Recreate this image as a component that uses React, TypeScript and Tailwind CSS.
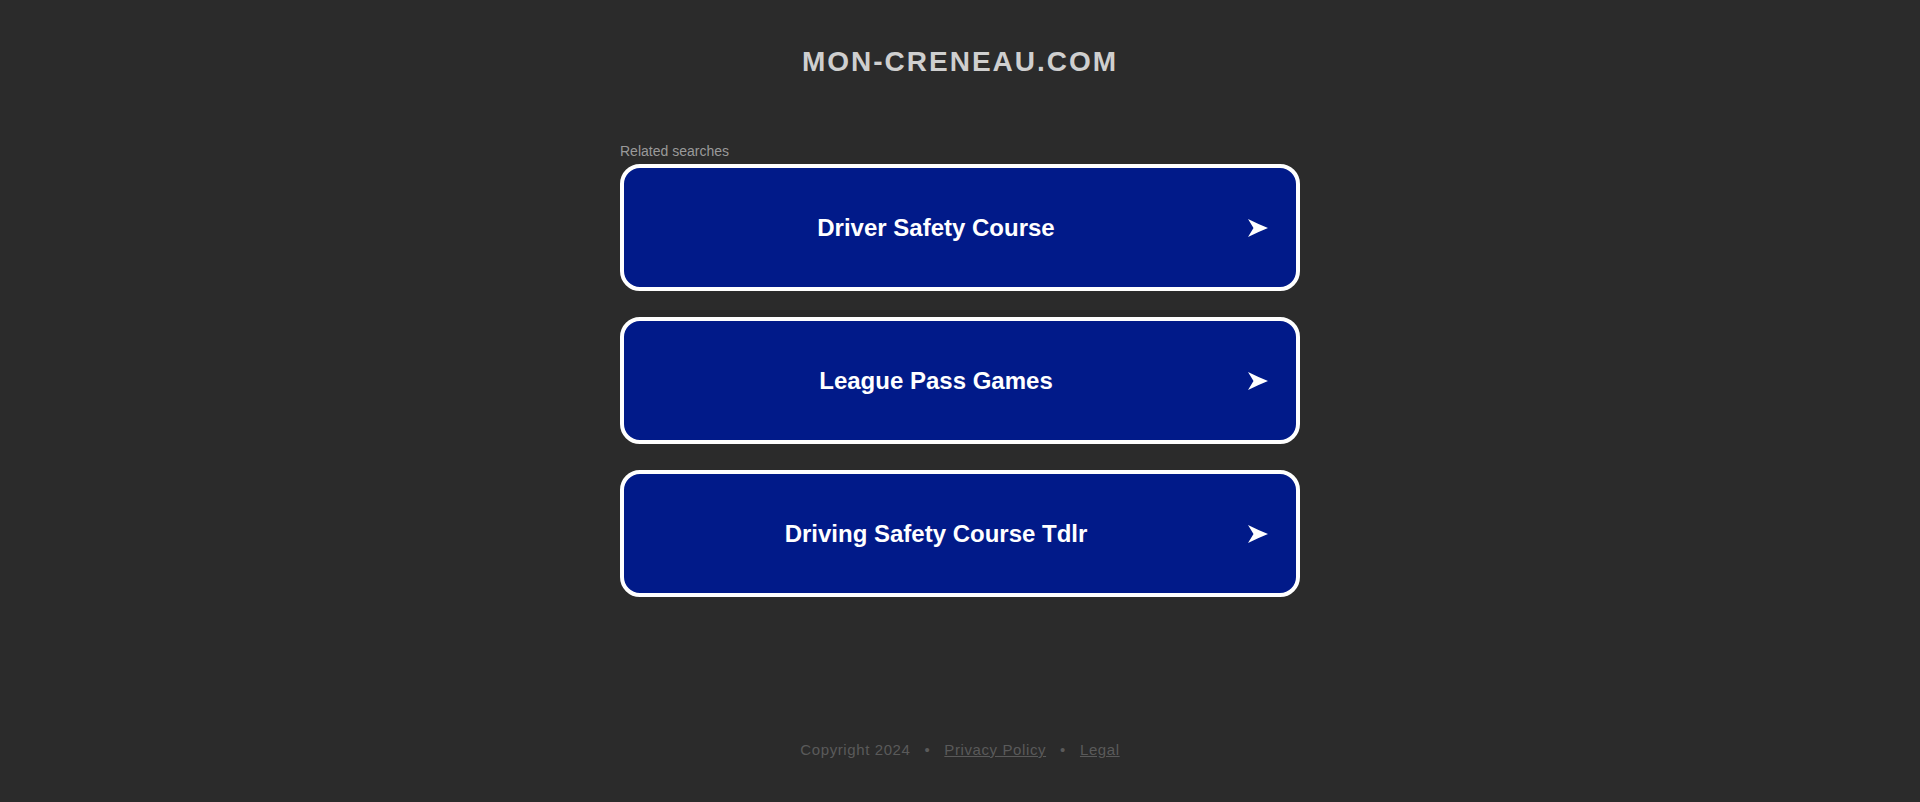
import React from "react";

const items = ["Driver Safety Course", "League Pass Games", "Driving Safety Course Tdlr"];

function Arrow() {
  return (
    <svg width="20" height="18" viewBox="0 0 20 18" className="mr-[28px] shrink-0">
      <path d="M0 0 Q10 5 20 9 Q10 13 0 18 L5.5 9 Z" fill="#ffffff" />
    </svg>
  );
}

export default function App() {
  return (
    <div
      className="min-h-[802px] w-full bg-[#2b2b2b] flex flex-col items-center"
      style={{ fontFamily: '"Liberation Sans", Arial, sans-serif' }}
    >
      <h1 className="mt-[46px] text-[28px] leading-[32px] font-bold tracking-[2px] text-[#cfcfcf]">
        MON-CRENEAU.COM
      </h1>
      <div className="mt-[65px] w-[680px] flex flex-col">
        <div className="text-[14px] leading-[16px] text-[#9a9a9a]">Related searches</div>
        <div className="mt-[5px] flex flex-col gap-[26px]">
          {items.map((t) => (
            <div
              key={t}
              className="h-[127px] w-full rounded-[20px] border-4 border-white bg-[#011a89] flex items-center"
            >
              <span className="flex-1 text-center text-[24px] font-bold text-white leading-[28px]">{t}</span>
              <Arrow />
            </div>
          ))}
        </div>
      </div>
      <div className="mt-[144px] flex items-center gap-[14px] text-[15px] leading-[17px] tracking-[0.6px] text-[#5a5a5a]">
        <span>Copyright 2024</span>
        <span>•</span>
        <a className="underline">Privacy Policy</a>
        <span>•</span>
        <a className="underline">Legal</a>
      </div>
    </div>
  );
}
